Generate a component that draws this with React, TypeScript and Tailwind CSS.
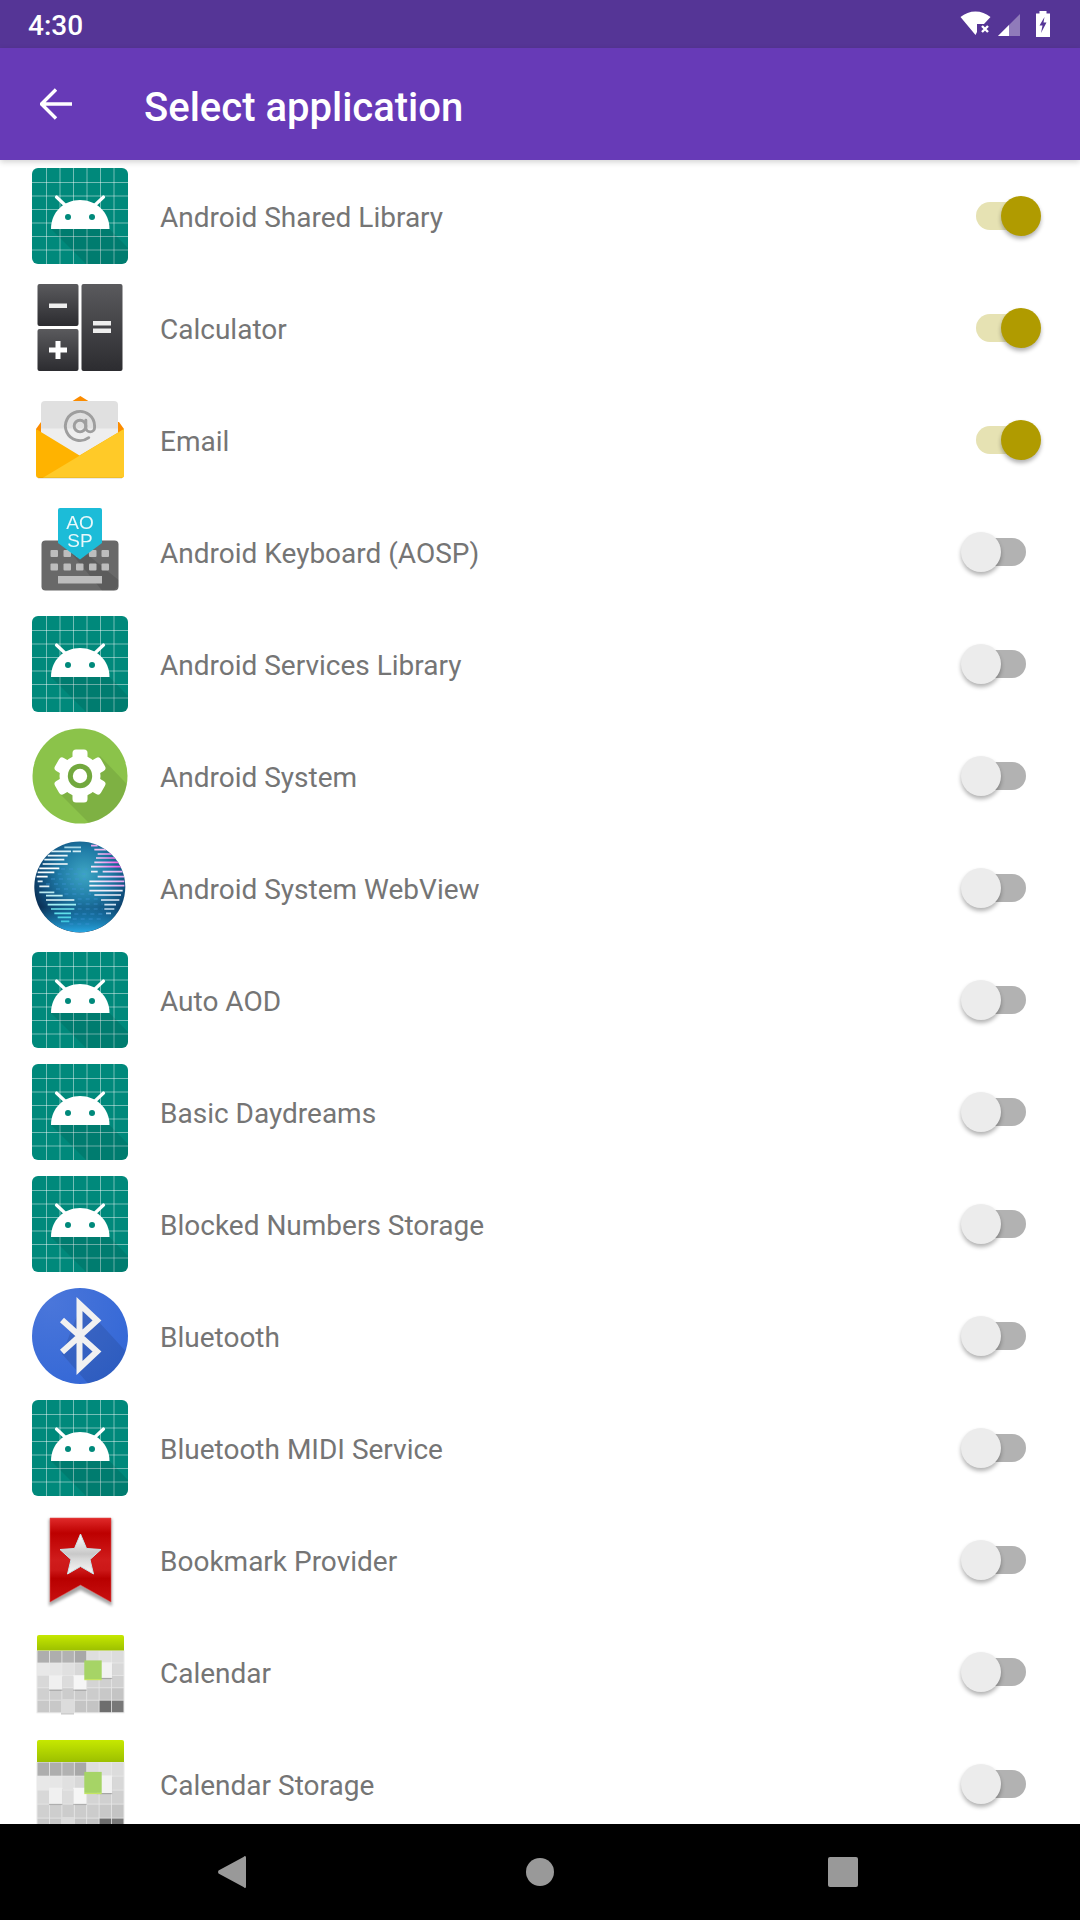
import React from 'react';
import { AtSign } from 'lucide-react';

const gridLines = [14.5, 28, 41.5, 55, 68.5, 82];

function AndroidIcon() {
  return (
    <svg width="96" height="96" viewBox="0 0 96 96">
      <defs>
        <clipPath id="androidClip">
          <rect width="96" height="96" rx="6" />
        </clipPath>
      </defs>
      <g clipPath="url(#androidClip)">
        <rect width="96" height="96" fill="#00897b" />
        {gridLines.map((p) => (
          <g key={p} stroke="#ffffff" strokeOpacity="0.45" strokeWidth="1">
            <line x1={p} y1="0" x2={p} y2="96" />
            <line x1="0" y1={p} x2="96" y2={p} />
          </g>
        ))}
        <polygon points="19,61 77.5,61 96,80 96,96 54,96" fill="#000000" fillOpacity="0.09" />
      </g>
      <line x1="24.5" y1="29" x2="33" y2="37" stroke="#fff" strokeWidth="3.2" strokeLinecap="round" />
      <line x1="71.5" y1="29" x2="63" y2="37" stroke="#fff" strokeWidth="3.2" strokeLinecap="round" />
      <path d="M19 61 C19 44 32 32 48 32 C64 32 77.5 44 77.5 61 Z" fill="#fff" />
      <circle cx="36" cy="49" r="3" fill="#00897b" />
      <circle cx="60" cy="49" r="3" fill="#00897b" />
    </svg>
  );
}

function CalculatorIcon() {
  return (
    <svg width="96" height="96" viewBox="0 0 96 96">
      <defs>
        <linearGradient id="calcGrad" x1="0" y1="0" x2="0" y2="1">
          <stop offset="0" stopColor="#5a5a5d" />
          <stop offset="1" stopColor="#2c2c30" />
        </linearGradient>
      </defs>
      <rect x="5.5" y="4" width="41" height="42" rx="2" fill="url(#calcGrad)" />
      <rect x="5.5" y="49" width="41" height="42" rx="2" fill="url(#calcGrad)" />
      <rect x="49.5" y="4" width="41" height="87" rx="2" fill="url(#calcGrad)" />
      <rect x="17" y="23.5" width="18" height="4.5" fill="#eeeeee" />
      <rect x="17" y="67.5" width="18" height="5" fill="#ffffff" />
      <rect x="23.5" y="61" width="5" height="18" fill="#ffffff" />
      <rect x="61" y="41" width="18" height="4.5" fill="#eeeeee" />
      <rect x="61" y="48.5" width="18" height="4.5" fill="#eeeeee" />
    </svg>
  );
}

function EmailIcon() {
  return (
    <svg width="96" height="96" viewBox="0 0 96 96">
      <polygon points="39,10 48.3,4 58,10" fill="#fb8c00" />
      <polygon points="4,37 9,30 87,30 92,37 92,50 4,50" fill="#fb8c00" />
      <rect x="9" y="9" width="77" height="60" rx="4" fill="#e0e0e0" />
      <rect x="9" y="36.5" width="77" height="32" fill="#eeeeee" />
      <AtSign x="30.5" y="16.5" width="35" height="35" color="#9e9e9e" strokeWidth="2" />
      <path d="M4 37 L47.5 63.5 L92 37 L92 83 Q92 86 89 86 L7 86 Q4 86 4 83 Z" fill="#ffb300" />
      <path d="M92 37 L92 83 Q92 86 89 86 L10.5 86 Z" fill="#ffca28" />
      <rect x="6" y="85.5" width="84" height="1.2" fill="#000000" fillOpacity="0.12" />
    </svg>
  );
}

function KeyboardIcon() {
  return (
    <svg width="96" height="96" viewBox="0 0 96 96">
      <rect x="9.5" y="36.5" width="77" height="50" rx="4" fill="#696969" />
      <polygon points="50,46 86.5,76 86.5,82 82,86.5 70,86.5 40,50" fill="#000000" fillOpacity="0.12" />
      {[46, 59.5].map((y) =>
        [18.5, 31.5, 44, 57, 69.5].map((x) => (
          <rect key={`${x}-${y}`} x={x} y={y} width="7.5" height="7" rx="1" fill="#bdbdbd" />
        )),
      )}
      <rect x="26" y="72" width="44" height="7.5" fill="#bdbdbd" />
      <path d="M28 4 H68 Q70 4 70 6 V39 L48 55.5 L26 39 V6 Q26 4 28 4 Z" fill="#1cbcd8" />
      <text textAnchor="middle" fontSize="19" fill="#e8f8fb" style={{ fontFamily: '"Liberation Sans", sans-serif' }}>
        <tspan x="48" y="24.5">AO</tspan>
        <tspan x="48" y="43">SP</tspan>
      </text>
    </svg>
  );
}

function SystemIcon() {
  return (
    <svg width="96" height="96" viewBox="0 0 96 96">
      <defs>
        <clipPath id="systemClip">
          <circle cx="48" cy="48" r="47.5" />
        </clipPath>
      </defs>
      <circle cx="48" cy="48" r="47.5" fill="#8bc34a" />
      <polygon points="28,66 68,28 110,72 72,110" fill="#000000" fillOpacity="0.09" clipPath="url(#systemClip)" />
      <circle cx="48" cy="48" r="20.5" fill="#ffffff" />
      {[0, 60, 120, 180, 240, 300].map((a) => (
        <rect key={a} x="40.5" y="21.5" width="15" height="14" rx="3.5" fill="#ffffff" transform={`rotate(${a} 48 48)`} />
      ))}
      <circle cx="48" cy="48" r="12.2" fill="#72a83e" />
      <circle cx="48" cy="48" r="7.2" fill="#ffffff" />
    </svg>
  );
}

// y, x1, x2 in 3x crop coordinates of the icon
const globeStripes: [number, number, number, string][] = [
  [40, 115, 165, '#a8d8e8'],
  [52, 75, 135, '#d4eef5'],
  [52, 140, 165, '#d4eef5'],
  [65, 65, 125, '#e8f6fa'],
  [77, 55, 115, '#e8f6fa'],
  [90, 50, 125, '#ffffff'],
  [103, 40, 100, '#ffffff'],
  [115, 35, 85, '#f4fbfd'],
  [128, 32, 65, '#ffffff'],
  [142, 35, 50, '#e0f0f5'],
  [157, 40, 70, '#e0f0f5'],
  [175, 40, 85, '#b8e8f0'],
  [185, 60, 110, '#c0f0f4'],
  [198, 60, 145, '#e8fcfc'],
  [212, 65, 150, '#a0f0f4'],
  [225, 75, 145, '#70e6ee'],
  [238, 85, 135, '#60e0ea'],
  [250, 95, 135, '#50d4e4'],
  [262, 105, 130, '#40c8e0'],
  [35, 195, 215, '#e8a8ec'],
  [47, 205, 240, '#eec0f0'],
  [60, 215, 260, 'url(#stripeMag)'],
  [72, 210, 275, 'url(#stripeMag)'],
  [85, 205, 285, 'url(#stripeMag)'],
  [98, 195, 290, 'url(#stripeMag)'],
  [113, 195, 215, '#f0f0fa'],
  [113, 230, 290, 'url(#stripePale)'],
  [128, 215, 295, 'url(#stripePale)'],
  [142, 190, 295, 'url(#stripePale)'],
  [155, 190, 295, 'url(#stripePale)'],
  [170, 190, 290, '#f4f0fa'],
  [183, 205, 285, '#f0f0fa'],
  [198, 225, 280, '#e4ecf8'],
  [212, 235, 270, '#d0e4f4'],
  [225, 235, 265, '#c0dcf0'],
  [238, 240, 255, '#a8d0ec'],
];

const globeDashRows: [number, number, number][] = [
  [105, 105, 185],
  [120, 95, 185],
  [135, 75, 180],
  [150, 60, 180],
  [165, 90, 180],
  [180, 115, 195],
  [195, 155, 215],
  [210, 155, 230],
  [225, 155, 230],
  [240, 145, 235],
  [255, 140, 225],
  [270, 130, 200],
];

const sc = (z: number) => z / 3 - 6;

function WebViewIcon() {
  return (
    <svg width="96" height="96" viewBox="0 0 96 96">
      <defs>
        <radialGradient id="globeGrad" cx="0.55" cy="0.36" r="0.62">
          <stop offset="0" stopColor="#3ea6c4" />
          <stop offset="0.45" stopColor="#1f7ba6" />
          <stop offset="0.8" stopColor="#0f4b78" />
          <stop offset="1" stopColor="#0a2c50" />
        </radialGradient>
        <linearGradient id="globeRim" x1="0" y1="0" x2="0" y2="1">
          <stop offset="0.72" stopColor="#1ea8e0" stopOpacity="0" />
          <stop offset="1" stopColor="#28a8e4" stopOpacity="1" />
        </linearGradient>
        <linearGradient id="stripeMag" gradientUnits="userSpaceOnUse" x1="60" y1="0" x2="92" y2="0">
          <stop offset="0" stopColor="#f6e8f8" />
          <stop offset="1" stopColor="#f040e0" />
        </linearGradient>
        <linearGradient id="stripePale" gradientUnits="userSpaceOnUse" x1="60" y1="0" x2="92" y2="0">
          <stop offset="0" stopColor="#f4f4fc" />
          <stop offset="1" stopColor="#e8a8f0" />
        </linearGradient>
        <clipPath id="globeClip">
          <circle cx="47.8" cy="47" r="45.5" />
        </clipPath>
      </defs>
      <circle cx="47.8" cy="47" r="45.5" fill="url(#globeGrad)" />
      <g clipPath="url(#globeClip)">
        <circle cx="47.8" cy="47" r="45.5" fill="url(#globeRim)" />
        {globeDashRows.map(([y, x1, x2]) => (
          <line
            key={y}
            x1={sc(x1)}
            y1={sc(y)}
            x2={sc(x2)}
            y2={sc(y)}
            stroke="#3f94d8"
            strokeOpacity="0.45"
            strokeWidth="1.3"
            strokeDasharray="4 4"
          />
        ))}
        {globeStripes.map(([y, x1, x2, c]) => (
          <line key={`${x1}-${y}`} x1={sc(x1)} y1={sc(y)} x2={sc(x2)} y2={sc(y)} stroke={c} strokeWidth="1.6" />
        ))}
      </g>
    </svg>
  );
}

function BluetoothIcon() {
  return (
    <svg width="96" height="96" viewBox="0 0 96 96">
      <defs>
        <clipPath id="btClip">
          <circle cx="48" cy="48" r="48" />
        </clipPath>
        <radialGradient id="btGrad" cx="0.2" cy="0.15" r="1">
          <stop offset="0" stopColor="#4a76da" />
          <stop offset="1" stopColor="#3367d6" />
        </radialGradient>
      </defs>
      <circle cx="48" cy="48" r="48" fill="url(#btGrad)" />
      <polygon points="50,15 66,33 100,70 60,100 30,66" fill="#000000" fillOpacity="0.1" clipPath="url(#btClip)" />
      <path d="M30 32 L65 63.5 L47.5 80 V16 L65 32.5 L30 64" fill="none" stroke="#f1f1f1" strokeWidth="6" strokeLinejoin="miter" />
    </svg>
  );
}

function BookmarkIcon() {
  return (
    <svg width="96" height="96" viewBox="0 0 96 96">
      <defs>
        <linearGradient id="bookGrad" x1="0" y1="0" x2="0" y2="1">
          <stop offset="0" stopColor="#e02a2a" />
          <stop offset="0.18" stopColor="#bd0000" />
          <stop offset="0.5" stopColor="#d01c1c" />
          <stop offset="0.62" stopColor="#cc1818" />
          <stop offset="0.72" stopColor="#b80000" />
          <stop offset="1" stopColor="#c81010" />
        </linearGradient>
        <linearGradient id="starGrad" x1="0" y1="0" x2="0" y2="1">
          <stop offset="0" stopColor="#ffffff" />
          <stop offset="0.5" stopColor="#c8c8c8" />
          <stop offset="0.62" stopColor="#d8d8d8" />
          <stop offset="1" stopColor="#f8f8f8" />
        </linearGradient>
        <filter id="bookBlur" x="-20%" y="-20%" width="140%" height="140%">
          <feGaussianBlur stdDeviation="1.4" />
        </filter>
      </defs>
      <polygon points="17,7 80,7 80,94 48.5,78 17,94" fill="#000000" fillOpacity="0.35" filter="url(#bookBlur)" />
      <polygon points="18,6 79,6 79,90 48.5,73 18,90" fill="url(#bookGrad)" stroke="#e85050" strokeOpacity="0.5" strokeWidth="1" />
      <polygon
        points="48.5,22 54.5,36.5 69,37.5 58,47.5 61.5,62 48.5,54.5 35.5,62 39,47.5 28,37.5 42.5,36.5"
        fill="url(#starGrad)"
        stroke="#c8e4ea"
        strokeWidth="1"
        strokeLinejoin="round"
      />
    </svg>
  );
}

const calRows = [
  ['#aeaeae', '#aeaeae', '#b2b2b2', '#a8a8a8', '#dedede', '#e0e0e0', '#dcdcdc'],
  ['#e8e8e8', '#e6e6e6', '#e0e0e0', '#d8d8d8', '#dcdcdc', '#dcdcdc', '#d8d8d8'],
  ['#d8d8d8', '#d8d8d8', '#dcdcdc', '#d4d4d4', '#d4d4d4', '#d0d0d0', '#d0d0d0'],
  ['#d0d0d0', '#cecece', '#cccccc', '#cccccc', '#cccccc', '#c8c8c8', '#c4c4c4'],
  ['#c8c8c8', '#c8c8c8', '#d4d4d4', '#c4c4c4', '#c4c4c4', '#6e6e6e', '#787878'],
];

function CalendarIcon({ id, top, header, cell }: { id: string; top: number; header: number; cell: number }) {
  const grid = top + header;
  const cx = (c: number) => 5 + c * 12.4;
  const cy = (r: number) => grid + r * cell;
  const raisedY = cy(2) - (cell - 12.4) * 1.4;
  const raised: [number, number, number, number, string][] = [
    [64.7, cy(1) - 0.5, 15.5, cell * 1.25, '#f2f2f2'],
    [17, raisedY, 13.4, cell * 1.15, '#f0f0f0'],
    [41.3, raisedY, 13.4, cell * 1.15, '#f6f6f6'],
    [29, cy(4) - 1, 13, cell * 1.15, '#dcdcdc'],
  ];
  return (
    <svg width="96" height="96" viewBox="0 0 96 96" className="overflow-visible">
      <defs>
        <linearGradient id={id} x1="0" y1="0" x2="0" y2="1">
          <stop offset="0" stopColor="#c6e800" />
          <stop offset="1" stopColor="#9cc000" />
        </linearGradient>
      </defs>
      <rect x="4.5" y={grid} width="88" height={cell * 5 + 0.8} fill="#e8e8e8" />
      {calRows.map((row, r) =>
        row.map((c, i) => <rect key={`${r}-${i}`} x={cx(i) + 0.5} y={cy(r) + 0.5} width="11.6" height={cell - 0.8} fill={c} />),
      )}
      <path d={`M5 ${top + 2} Q5 ${top} 7 ${top} H90 Q92 ${top} 92 ${top + 2} V${grid} H5 Z`} fill={`url(#${id})`} />
      {raised.map(([x, y, w, h, c]) => (
        <g key={x}>
          <rect x={x} y={y + 1.2} width={w} height={h} fill="#000000" fillOpacity="0.2" />
          <rect x={x} y={y} width={w} height={h} fill={c} />
        </g>
      ))}
      <rect x="52.3" y={cy(1) - (cell - 12.4) - 2.5} width="17.4" height={cell * 1.5} fill="#a6d466" />
      <rect x="52.3" y={cy(1) - (cell - 12.4) - 2.5 + cell * 1.5} width="17.4" height="1.2" fill="#c4e660" />
    </svg>
  );
}

function Toggle({ on }: { on: boolean }) {
  return (
    <div className="relative ml-auto mr-[39px] h-10 w-20 shrink-0">
      <div className={on ? 'absolute left-[15px] top-1.5 h-7 w-[52px] rounded-full bg-[#e6e2b3]' : 'absolute left-[13px] top-1.5 h-7 w-[52px] rounded-full bg-[#b2b2b2]'} />
      <div
        className={
          on
            ? 'absolute left-10 top-0 h-10 w-10 rounded-full bg-[#b09b00] shadow-[0_3px_4px_rgba(0,0,0,0.3)]'
            : 'absolute left-0 top-0 h-10 w-10 rounded-full bg-[#ececec] shadow-[0_3px_4px_rgba(0,0,0,0.3)]'
        }
      />
    </div>
  );
}

const apps: { name: string; icon: React.ReactNode; on?: boolean }[] = [
  { name: 'Android Shared Library', icon: <AndroidIcon />, on: true },
  { name: 'Calculator', icon: <CalculatorIcon />, on: true },
  { name: 'Email', icon: <EmailIcon />, on: true },
  { name: 'Android Keyboard (AOSP)', icon: <KeyboardIcon /> },
  { name: 'Android Services Library', icon: <AndroidIcon /> },
  { name: 'Android System', icon: <SystemIcon /> },
  { name: 'Android System WebView', icon: <WebViewIcon /> },
  { name: 'Auto AOD', icon: <AndroidIcon /> },
  { name: 'Basic Daydreams', icon: <AndroidIcon /> },
  { name: 'Blocked Numbers Storage', icon: <AndroidIcon /> },
  { name: 'Bluetooth', icon: <BluetoothIcon /> },
  { name: 'Bluetooth MIDI Service', icon: <AndroidIcon /> },
  { name: 'Bookmark Provider', icon: <BookmarkIcon /> },
  { name: 'Calendar', icon: <CalendarIcon id="calA" top={11} header={15.5} cell={12.4} /> },
  { name: 'Calendar Storage', icon: <CalendarIcon id="calB" top={4} header={22} cell={14} /> },
];

export default function App() {
  return (
    <div className="flex h-[1920px] w-[1080px] flex-col overflow-hidden bg-white font-['Roboto',sans-serif]">
      <div className="flex h-12 shrink-0 items-center bg-[#553596] pl-7 pr-[30px] text-white">
        <span className="mt-[3px] text-[28px] font-medium leading-none">4:30</span>
        <svg width="32" height="26" viewBox="0 0 32 26" className="ml-auto mt-[-1px]">
          <path d="M0.5 6 C9 -1.5 22 -1.5 30.5 6 L24 13 H17 V21 L15.5 24 Z" fill="#fff" />
          <path d="M22 15 L28 21 M28 15 L22 21" stroke="#fff" strokeWidth="2.4" />
        </svg>
        <svg width="22" height="22" viewBox="0 0 22 22" className="ml-[6px] mt-[1px]">
          <polygon points="22,0 22,22 0,22" fill="#fff" fillOpacity="0.35" />
          <polygon points="11,11 11,22 0,22" fill="#fff" />
        </svg>
        <svg width="14" height="26" viewBox="0 0 14 26" className="ml-4">
          <path d="M3.5 0 H10.5 V2.5 H14 V26 H0 V2.5 H3.5 Z" fill="#fff" />
          <path d="M8.5 6 L3.5 14.5 H6.5 L5 22 L10.5 11.5 H7.5 Z" fill="#553596" />
        </svg>
      </div>
      <div className="relative z-10 flex h-28 shrink-0 items-center bg-[#673ab7] shadow-[0_2px_6px_rgba(0,0,0,0.18)]">
        <svg width="32" height="32" viewBox="0 0 32 32" className="ml-10">
          <path d="M32 16 H2 M16 1.5 L1.5 16 L16 30.5" fill="none" stroke="#fff" strokeWidth="3.4" />
        </svg>
        <h1 className="ml-[72px] mt-[7px] text-[40px] font-medium leading-none text-white">Select application</h1>
      </div>
      <div className="min-h-0 flex-1 overflow-hidden">
        {apps.map((app) => (
          <div key={app.name} className="flex h-28 items-center pl-8">
            <div className="h-24 w-24 shrink-0 blur-[0.5px]">{app.icon}</div>
            <span className="ml-8 mt-[3px] text-[28px] leading-none text-[#757575]">{app.name}</span>
            <Toggle on={!!app.on} />
          </div>
        ))}
      </div>
      <div className="relative z-10 flex h-24 shrink-0 items-center bg-black">
        <svg width="30" height="34" viewBox="0 0 30 34" className="ml-[217px]">
          <path d="M28 1 Q29 1 29 2.5 V31.5 Q29 33 28 33 Q27.5 33 26.5 32 L1.5 18.5 Q0.5 17 1.5 15.5 L26.5 2 Q27.5 1 28 1 Z" fill="#999999" />
        </svg>
        <div className="ml-[279px] h-7 w-7 rounded-full bg-[#999999]" />
        <div className="ml-[274px] h-[30px] w-[30px] rounded-[2px] bg-[#999999]" />
      </div>
    </div>
  );
}
